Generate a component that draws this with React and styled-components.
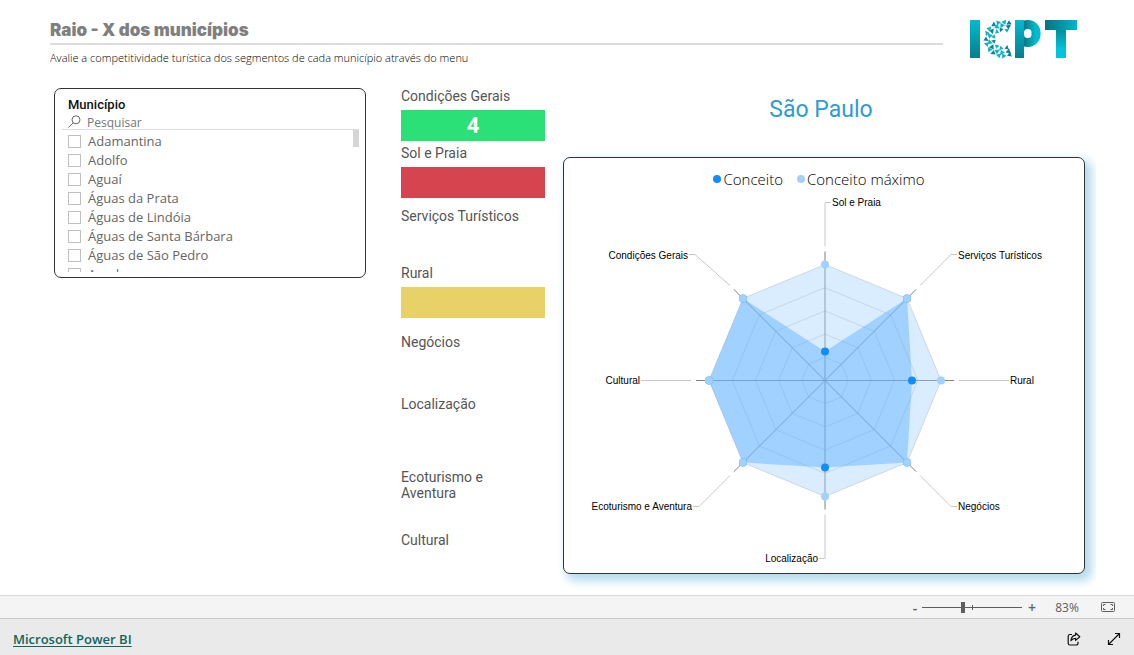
import React from 'react'
import styled, { createGlobalStyle } from 'styled-components'

const GlobalStyle = createGlobalStyle`
    * {
        box-sizing: border-box;
    }

    body {
        margin: 0;
        background-color: #fff;
        font-family: "Open Sans", "Noto Sans", sans-serif;
    }
`;

const Page = styled.div`
    display: flex;
    flex-direction: column;
    min-height: 100vh;
`;

const Report = styled.main`
    flex: 1;
    padding-bottom: 20px;
`;

/* header */

const Header = styled.header`
    display: flex;
    justify-content: space-between;
    gap: 27px;
    height: 88px;
    padding: 20px 56px 0 50px;
`;

const Heading = styled.div`
    flex: 1;
`;

const Title = styled.h1`
    margin: 0;
    padding-bottom: 3px;
    border-bottom: 2px solid #dcdcdc;
    color: #7f7f7f;
    font-family: Inter, "Liberation Sans", sans-serif;
    font-size: 17px;
    font-weight: 900;
    line-height: 20px;
`;

const Subtitle = styled.p`
    margin: 5px 0 0;
    color: #000;
    font-size: 11px;
    font-weight: 300;
    line-height: 16px;
`;

/* body */

const Columns = styled.div`
    display: grid;
    grid-template-columns: 347fr 162fr 522fr;
    align-items: start;
    padding: 0 49px 0 54px;
`;

const Slicer = styled.section`
    height: 190px;
    margin-right: 35px;
    padding: 7px 6px 5px 7px;
    border: 1px solid #333;
    border-radius: 7px;
`;

const SlicerTitle = styled.h2`
    margin: 0 0 0 6px;
    color: #111;
    font-family: Roboto, sans-serif;
    font-size: 13px;
    font-weight: 500;
    line-height: 18px;
`;

const Search = styled.label`
    display: flex;
    align-items: center;
    gap: 6px;
    height: 16px;
    padding-left: 6px;
    border-bottom: 1px solid #dcdcdc;
`;

const SearchInput = styled.input`
    flex: 1;
    min-width: 0;
    height: 15px;
    padding: 1px 0 0;
    border: 0;
    outline: 0;
    background: none;
    color: #666;
    font-family: inherit;
    font-size: 12px;

    &::placeholder {
        color: #777;
        opacity: 1;
    }
`;

const ListArea = styled.div`
    display: flex;
    height: 142px;
`;

const List = styled.ul`
    flex: 1;
    margin: 0;
    padding: 2px 0 0 6px;
    overflow: hidden;
    list-style: none;
`;

const ScrollTrack = styled.div`
    width: 6px;
`;

const ScrollThumb = styled.div`
    height: 17px;
    background-color: #d6d6d6;
`;

const Option = styled.label`
    display: flex;
    align-items: center;
    gap: 7px;
    color: #666;
    font-size: 13px;
    line-height: 19px;
`;

const Checkbox = styled.input`
    appearance: none;
    width: 13px;
    height: 13px;
    margin: 0;
    border: 1px solid #c0c0c0;
    background-color: #fff;

    &:checked {
        background-color: #666;
    }
`;

const Indicators = styled.dl`
    display: grid;
    grid-template-rows: 57px 63px 57px 69px 62px 73px 63px auto;
    margin: 0 18px 0 0;
`;

const IndicatorName = styled.dt`
    max-width: 128px;
    margin-bottom: 6px;
    color: #555;
    font-family: Roboto, sans-serif;
    font-size: 14px;
    line-height: 16px;
`;

const IndicatorValue = styled.dd`
    height: 31px;
    margin: 0;
    background-color: ${props => props.$color};
    color: #fff;
    font-family: Roboto, sans-serif;
    font-size: 22px;
    font-weight: 700;
    line-height: 32px;
    text-align: center;
`;

const City = styled.h2`
    height: 69px;
    margin: 0;
    padding: 8px 6px 0 0;
    color: #2e9bd6;
    font-family: Roboto, sans-serif;
    font-size: 23px;
    font-weight: 400;
    line-height: 28px;
    text-align: center;
`;

const ChartCard = styled.section`
    height: 417px;
    padding-top: 10px;
    border: 1px solid #333;
    border-radius: 7px;
    background-color: #fff;
    box-shadow: 5px 5px 10px 2px #b4dcec;
    clip-path: inset(-10px -11px -22px -10px);
`;

const Legend = styled.div`
    display: flex;
    justify-content: center;
    gap: 14px;
    height: 22px;
    padding-right: 10px;
    color: #000;
    font-size: 15px;
    font-weight: 300;
    line-height: 20px;
`;

const LegendItem = styled.span`
    display: flex;
    align-items: center;
    gap: 2px;

    &::before {
        content: "";
        width: 8px;
        height: 8px;
        border-radius: 50%;
        background-color: ${props => props.$color};
    }
`;

const ChartSvg = styled.svg`
    display: block;
    width: 100%;
    height: 383px;
    font-family: "Liberation Sans", Arial, sans-serif;
    font-size: 10px;
`;

/* bars at the bottom */

const StatusBar = styled.div`
    display: flex;
    align-items: center;
    justify-content: flex-end;
    height: 23px;
    padding-right: 13px;
    border-top: 1px solid #d9d9d9;
    background-color: #f4f4f4;
    color: #605e5c;
    font-size: 12px;
`;

const IconButton = styled.button`
    display: flex;
    align-items: center;
    justify-content: center;
    width: ${props => props.$width || 14}px;
    height: 20px;
    padding: 0;
    border: 0;
    background: none;
    color: inherit;
    font-family: inherit;
    font-size: 14px;
    font-weight: 600;
    cursor: pointer;
`;

const ZoomSlider = styled.input`
    appearance: none;
    width: 100px;
    height: 11px;
    margin: 0 3px 0 0;
    background:
        linear-gradient(#605e5c, #605e5c) 50px 50% / 1px 5px no-repeat,
        linear-gradient(#605e5c, #605e5c) 0 50% / 100% 1px no-repeat;

    &::-webkit-slider-thumb {
        appearance: none;
        width: 4px;
        height: 11px;
        background-color: #605e5c;
    }
`;

const ZoomValue = styled.output`
    width: 56px;
    text-align: center;
`;

const Footer = styled.footer`
    display: flex;
    align-items: center;
    justify-content: space-between;
    height: 37px;
    padding: 3px 13px 0;
    border-top: 1px solid #c8c8c8;
    background-color: #eaeaea;
`;

const BrandLink = styled.a`
    color: #10655f;
    font-size: 13px;
    font-weight: 600;
    text-underline-offset: 2px;
`;

const FooterActions = styled.div`
    display: flex;
    gap: 26px;
    color: #111;
`;

const cities = [
    'Adamantina',
    'Adolfo',
    'Aguaí',
    'Águas da Prata',
    'Águas de Lindóia',
    'Águas de Santa Bárbara',
    'Águas de São Pedro',
    'Agudos',
];

const indicators = [
    { name: 'Condições Gerais', value: '4', color: '#2be077' },
    { name: 'Sol e Praia', color: '#d6454f' },
    { name: 'Serviços Turísticos' },
    { name: 'Rural', color: '#e8d166' },
    { name: 'Negócios' },
    { name: 'Localização' },
    { name: 'Ecoturismo e Aventura' },
    { name: 'Cultural' },
];

// clockwise from the top; line and label are relative to the centre
const axes = [
    { name: 'Sol e Praia', value: 1, line: '0,-134 0,-178 6,-178', x: 7, y: -175 },
    { name: 'Serviços Turísticos', value: 4, line: '95,-95 126,-126 132,-126', x: 133, y: -122 },
    { name: 'Rural', value: 3, line: '134,0 184,0', x: 185, y: 3 },
    { name: 'Negócios', value: 4, line: '95,95 126,126 132,126', x: 133, y: 129 },
    { name: 'Localização', value: 3, line: '0,134 0,178 -6,178', x: -7, y: 181, end: true },
    { name: 'Ecoturismo e Aventura', value: 4, line: '-95,95 -126,126 -132,126', x: -133, y: 129, end: true },
    { name: 'Cultural', value: 4, line: '-134,0 -184,0', x: -185, y: 3, end: true },
    { name: 'Condições Gerais', value: 4, line: '-95,-95 -130,-126 -136,-126', x: -137, y: -122, end: true },
];

const MAX = 4;
const RADIUS = 116;

const polar = (radius, index) => {
    const angle = (index * Math.PI) / 4;
    return [radius * Math.sin(angle), -radius * Math.cos(angle)];
};

const outline = radiusAt => axes.map((axis, i) => polar(radiusAt(axis), i).join(',')).join(' ');

const Radar = () => (
    <ChartSvg viewBox="-261 -190.5 520 383" role="img" aria-label="Conceito por segmento">
        {[1, 2, 3, 4, 5].map(step => (
            <polygon key={step} points={outline(() => (RADIUS * step) / 5)} fill="none" stroke="#dadada" />
        ))}
        {axes.map((axis, i) => {
            const [x, y] = polar(RADIUS + 13, i);
            return <line key={axis.name} x2={x} y2={y} stroke="#808080" />;
        })}
        <polygon points={outline(axis => (RADIUS * axis.value) / MAX)} fill="#118dff" fillOpacity="0.4" />
        <polygon points={outline(() => RADIUS)} fill="#a0d1ff" fillOpacity="0.4" />
        {axes.map((axis, i) => {
            const [cx, cy] = polar((RADIUS * axis.value) / MAX, i);
            return <circle key={axis.name} cx={cx} cy={cy} r="4" fill="#118dff" />;
        })}
        {axes.map((axis, i) => {
            const [cx, cy] = polar(RADIUS, i);
            return <circle key={axis.name} cx={cx} cy={cy} r="4" fill="#a0d1ff" />;
        })}
        {axes.map(axis => (
            <g key={axis.name}>
                <polyline points={axis.line} fill="none" stroke="#c8c8c8" />
                <text x={axis.x} y={axis.y} textAnchor={axis.end ? 'end' : 'start'}>{axis.name}</text>
            </g>
        ))}
    </ChartSvg>
);

const mosaic = [
    { radius: 9.5, count: 8, size: 2.3 },
    { radius: 13.6, count: 10, size: 2.7 },
    { radius: 17, count: 13, size: 2.6 },
];

const Logo = () => (
    <svg width="108" height="39" viewBox="0 0 108 39" role="img" aria-label="ICPT">
        <defs>
            <linearGradient id="bar" x1="0" y1="0" x2="0" y2="1">
                <stop offset="0" stopColor="#00bcd0" />
                <stop offset="1" stopColor="#077d8c" />
            </linearGradient>
            <linearGradient id="fold" x1="0" y1="0" x2="1" y2="0">
                <stop offset="0.2" stopColor="#05727f" />
                <stop offset="1" stopColor="#00bcd0" />
            </linearGradient>
            <linearGradient id="top" x1="0" y1="0" x2="1" y2="0">
                <stop offset="0" stopColor="#05727f" />
                <stop offset="1" stopColor="#00b5ca" />
            </linearGradient>
            <linearGradient id="leg" x1="0" y1="0" x2="0" y2="1">
                <stop offset="0" stopColor="#078a99" />
                <stop offset="0.7" stopColor="#00c4dd" />
            </linearGradient>
        </defs>
        <rect width="10" height="38" fill="url(#bar)" />
        {mosaic.map(ring =>
            Array.from({ length: ring.count }, (_, i) => {
                const deg = 68 + (i * 224) / (ring.count - 1);
                const rad = (deg * Math.PI) / 180;
                const x = 33 + ring.radius * Math.cos(rad);
                const y = 19 + ring.radius * Math.sin(rad);
                const s = ring.size;
                return (
                    <polygon
                        key={`${ring.radius}-${i}`}
                        points={`${-s},${-s * 0.8} ${s},${-s * 0.6} 0,${s}`}
                        transform={`translate(${x} ${y}) rotate(${deg + (i % 2) * 180})`}
                        fill={i % 3 ? '#12b3c7' : '#0a8596'}
                    />
                );
            })
        )}
        <rect x="49.5" y="4.5" width="16.5" height="18" rx="8" fill="none" stroke="url(#fold)" strokeWidth="9" />
        <rect x="45" width="9" height="38" fill="url(#bar)" />
        <rect x="86" y="9" width="10" height="29" fill="url(#leg)" />
        <rect x="75" width="32" height="10" fill="url(#top)" />
    </svg>
);

const SearchIcon = () => (
    <svg width="13" height="13" viewBox="0 0 13 13" fill="none" stroke="#666">
        <circle cx="8" cy="4.8" r="4" />
        <path d="M5.2 7.8L0.5 12.5" />
    </svg>
);

const FitIcon = () => (
    <svg width="14" height="10" viewBox="0 0 14 10" fill="none" stroke="#605e5c">
        <rect x="0.5" y="0.5" width="13" height="9" rx="1" />
        <path d="M2.5 4V2.5H4.5M9.5 2.5H11.5V4M11.5 6V7.5H9.5M4.5 7.5H2.5V6" />
    </svg>
);

const ShareIcon = () => (
    <svg width="14" height="14" viewBox="0 0 14 14" fill="none" stroke="currentColor" strokeWidth="1.2" strokeLinejoin="round">
        <path d="M5 2.5H3A1.8 1.8 0 0 0 1.2 4.3V11.2A1.8 1.8 0 0 0 3 13H9.2A1.8 1.8 0 0 0 11 11.2V9.8" />
        <path d="M8.6 1L12.8 4.7L8.6 8.4V6.3C6.4 6.3 5 7 3.9 8.7C4.2 5.6 5.7 3.4 8.6 3.1Z" />
    </svg>
);

const ExpandIcon = () => (
    <svg width="14" height="14" viewBox="0 0 14 14" fill="none" stroke="currentColor" strokeWidth="1.2">
        <path d="M1.5 12.5L12.5 1.5M8 1.5H12.5V6M1.5 8V12.5H6" />
    </svg>
);

const App = () => {
    return (
        <Page>
            <GlobalStyle />
            <Report>
                <Header>
                    <Heading>
                        <Title>Raio - X dos municípios</Title>
                        <Subtitle>Avalie a competitividade turística dos segmentos de cada município através do menu</Subtitle>
                    </Heading>
                    <Logo />
                </Header>
                <Columns>
                    <Slicer>
                        <SlicerTitle>Município</SlicerTitle>
                        <Search>
                            <SearchIcon />
                            <SearchInput type="text" placeholder="Pesquisar" aria-label="Pesquisar" />
                        </Search>
                        <ListArea>
                            <List>
                                {cities.map(city => (
                                    <li key={city}>
                                        <Option>
                                            <Checkbox type="checkbox" />
                                            {city}
                                        </Option>
                                    </li>
                                ))}
                            </List>
                            <ScrollTrack>
                                <ScrollThumb />
                            </ScrollTrack>
                        </ListArea>
                    </Slicer>
                    <Indicators>
                        {indicators.map(item => (
                            <div key={item.name}>
                                <IndicatorName>{item.name}</IndicatorName>
                                {item.color && <IndicatorValue $color={item.color}>{item.value}</IndicatorValue>}
                            </div>
                        ))}
                    </Indicators>
                    <div>
                        <City>São Paulo</City>
                        <ChartCard>
                            <Legend>
                                <LegendItem $color="#118dff">Conceito</LegendItem>
                                <LegendItem $color="#a0d1ff">Conceito máximo</LegendItem>
                            </Legend>
                            <Radar />
                        </ChartCard>
                    </div>
                </Columns>
            </Report>
            <StatusBar>
                <IconButton aria-label="Reduzir">-</IconButton>
                <ZoomSlider type="range" min="0" max="100" defaultValue="41" aria-label="Zoom" aria-valuetext="83%" />
                <IconButton aria-label="Ampliar">+</IconButton>
                <ZoomValue>83%</ZoomValue>
                <IconButton $width={26} aria-label="Ajustar à página"><FitIcon /></IconButton>
            </StatusBar>
            <Footer>
                <BrandLink href="https://powerbi.microsoft.com">Microsoft Power BI</BrandLink>
                <FooterActions>
                    <IconButton aria-label="Compartilhar"><ShareIcon /></IconButton>
                    <IconButton aria-label="Tela inteira"><ExpandIcon /></IconButton>
                </FooterActions>
            </Footer>
        </Page>
    )
}

export default App;
